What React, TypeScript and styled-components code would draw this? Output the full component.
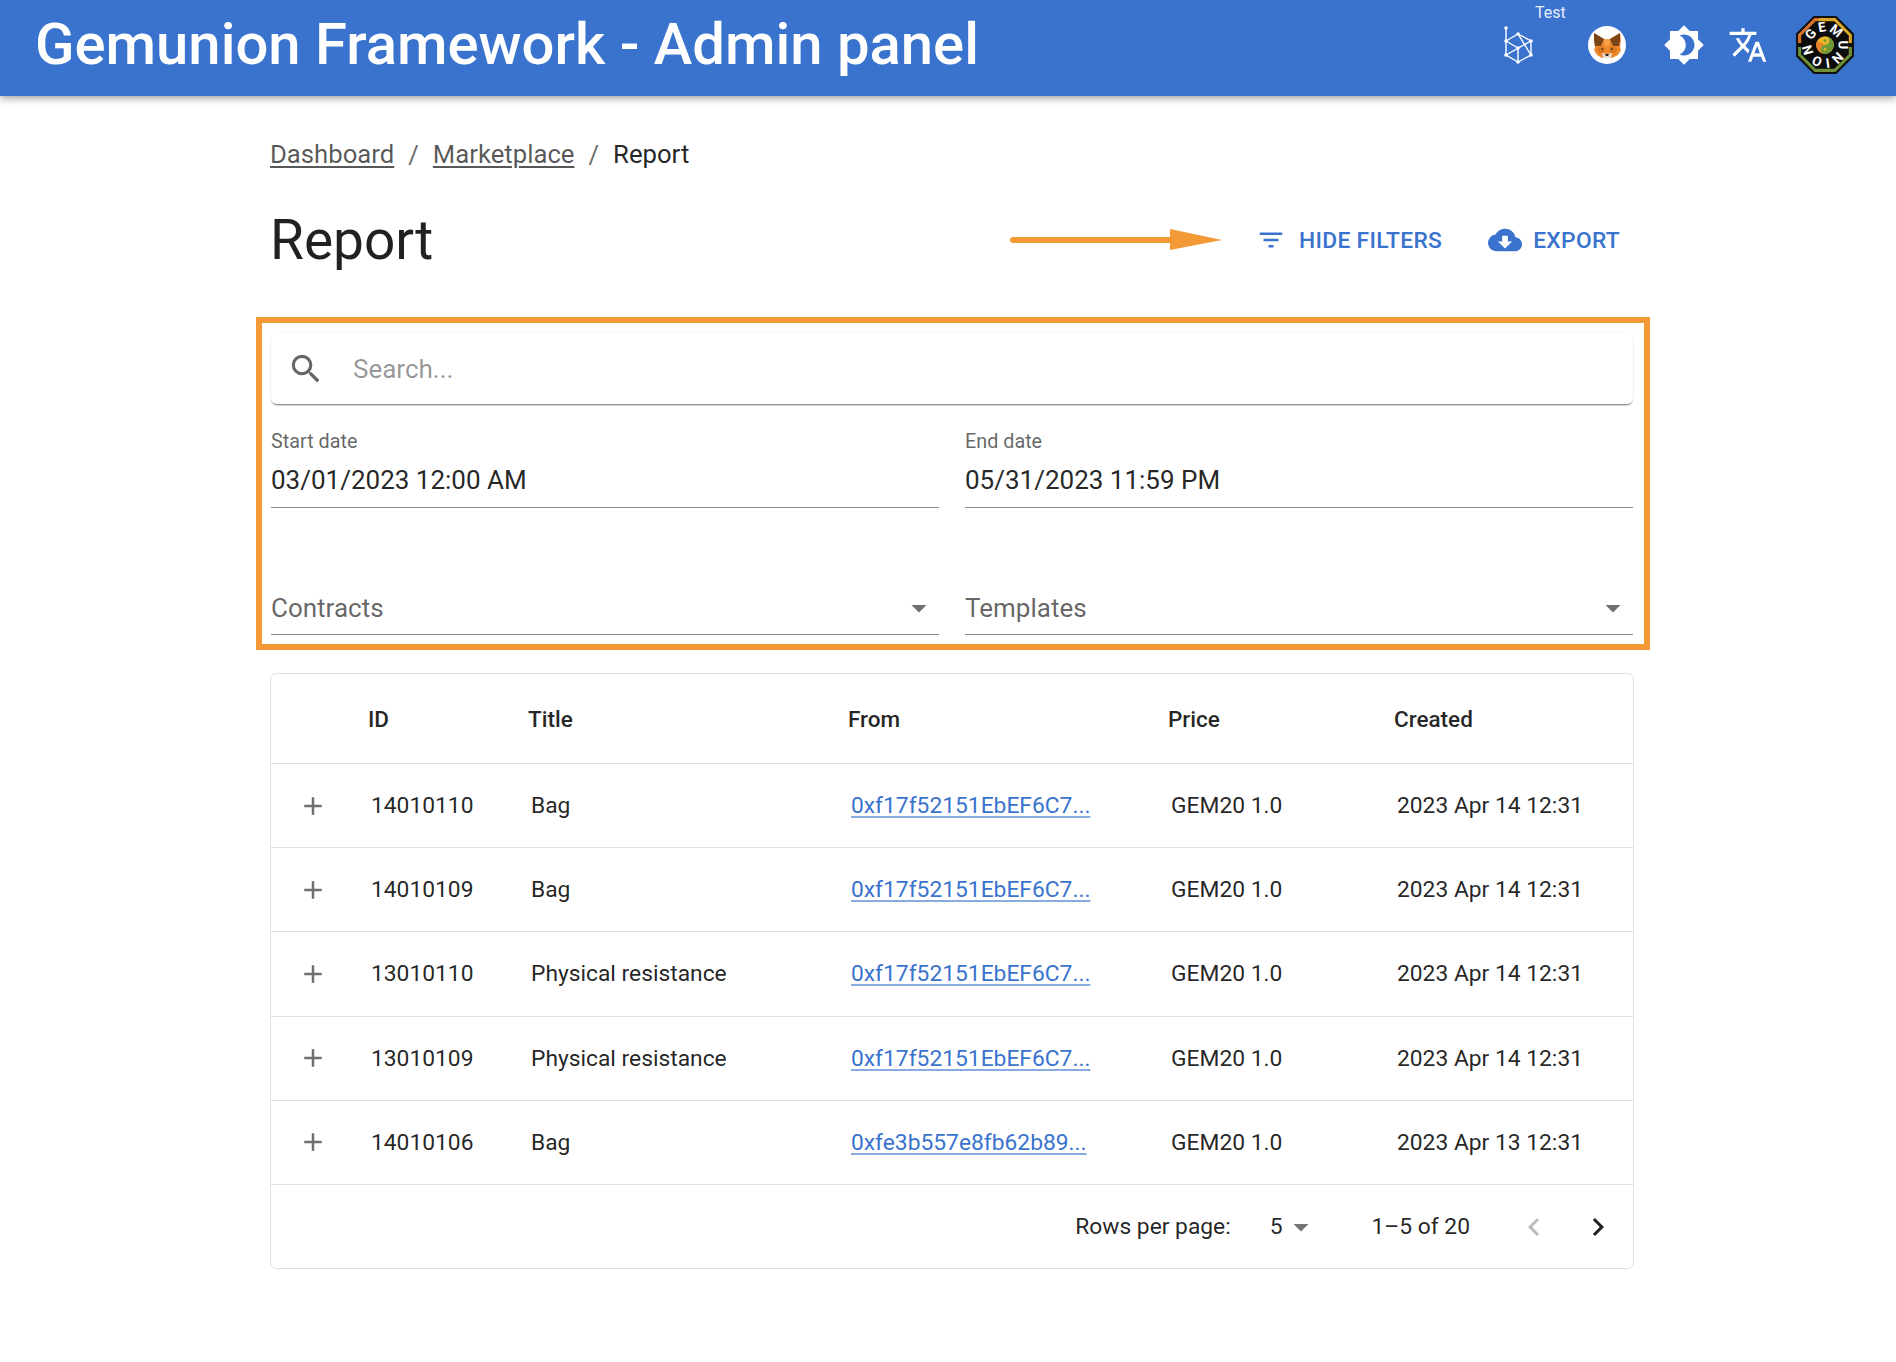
import { ReactElement } from 'react';
import styled, { createGlobalStyle } from 'styled-components';
import {
  MdAdd,
  MdArrowDropDown,
  MdBrightness4,
  MdChevronLeft,
  MdChevronRight,
  MdCloudDownload,
  MdFilterList,
  MdSearch,
  MdTranslate,
} from 'react-icons/md';

const GlobalStyle = createGlobalStyle`
  html, body {
    margin: 0;
    padding: 0;
    background: #fff;
    font-family: Roboto, "Liberation Sans", sans-serif;
    color: rgba(0, 0, 0, 0.87);
  }
`;

const Header = styled.header`
  height: 96px;
  background: #3973ce;
  box-shadow: 0 2px 8px rgba(0, 0, 0, 0.4);
  display: flex;
  align-items: center;
  justify-content: space-between;
  padding: 0 25px 0 35px;
  position: relative;
`;

const BrandTitle = styled.div`
  color: #fff;
  font-size: 58px;
  font-weight: 500;
  line-height: 88px;
  margin-bottom: 9px;
`;

const HeaderIcons = styled.div`
  display: flex;
  align-items: center;
  height: 96px;
  position: relative;
  color: #fff;
`;

const IconSlot = styled.div<{ $width: number }>`
  width: ${p => p.$width}px;
  display: flex;
  align-items: center;
  justify-content: center;
  margin-top: -6px;
`;

const NetworkLabel = styled.span`
  position: absolute;
  left: 61px;
  top: 4px;
  font-size: 16px;
  line-height: 18px;
  color: #e8eefa;
`;

const Page = styled.main`
  width: 1364px;
  margin-left: 270px;
  padding-top: 40px;
`;

const Crumbs = styled.nav`
  display: flex;
  gap: 14px;
  font-size: 25.7px;
  line-height: 36px;
  color: rgba(0, 0, 0, 0.6);
`;

const CrumbLink = styled.a`
  color: rgba(0, 0, 0, 0.66);
  text-decoration: underline;
  text-underline-offset: 3px;
`;

const CrumbCurrent = styled.span`
  color: rgba(0, 0, 0, 0.87);
`;

const TitleRow = styled.div`
  display: flex;
  align-items: center;
  justify-content: space-between;
  margin-top: 33px;
  height: 70px;
`;

const PageTitle = styled.h1`
  margin: 0;
  font-size: 55px;
  font-weight: 400;
  line-height: 70px;
`;

const Actions = styled.div`
  display: flex;
  align-items: center;
  gap: 46px;
  padding-right: 14px;
  position: relative;
`;

const ActionButton = styled.button<{ $gap: number }>`
  display: flex;
  align-items: center;
  gap: ${p => p.$gap}px;
  border: 0;
  background: none;
  padding: 0;
  color: #3973ce;
  font-family: inherit;
  font-size: 22.8px;
  font-weight: 500;
  letter-spacing: 0.3px;
  text-transform: uppercase;
`;

const ArrowMark = styled.svg`
  position: absolute;
  left: -246px;
  top: 2px;
`;

const FilterFrame = styled.section`
  box-sizing: border-box;
  margin: 42px -16px 0 -14px;
  height: 333px;
  border: 6px solid #f39a36;
  padding: 10px 11px 0 9px;
`;

const SearchBox = styled.div`
  display: flex;
  align-items: center;
  height: 71px;
  border-radius: 6px;
  background: #fff;
  box-shadow: 0 2px 2px -1px rgba(0, 0, 0, 0.55), 0 0 3px rgba(0, 0, 0, 0.08);
  color: #666;
  padding-left: 16px;
  gap: 28px;
`;

const SearchHint = styled.span`
  font-size: 26px;
  color: rgba(0, 0, 0, 0.42);
`;

const FieldGrid = styled.div`
  display: grid;
  grid-template-columns: 1fr 1fr;
  column-gap: 26px;
`;

const DateField = styled.div`
  border-bottom: 1px solid rgba(0, 0, 0, 0.45);
  height: 76px;
  margin-top: 27px;
`;

const FieldLabel = styled.div`
  font-size: 19.8px;
  line-height: 22px;
  color: rgba(0, 0, 0, 0.62);
`;

const FieldValue = styled.div`
  font-size: 26px;
  line-height: 30px;
  margin-top: 12px;
`;

const SelectField = styled.div`
  display: flex;
  align-items: center;
  justify-content: space-between;
  border-bottom: 1px solid rgba(0, 0, 0, 0.45);
  height: 52px;
  margin-top: 74px;
  font-size: 26px;
  color: rgba(0, 0, 0, 0.62);
  padding-right: 2px;

  svg {
    color: #6f6f6f;
  }
`;

const TableCard = styled.div`
  margin-top: 23px;
  border: 1px solid #e0e0e0;
  border-radius: 6px;
  height: 596px;
  box-sizing: border-box;
`;

const Row = styled.div`
  display: grid;
  grid-template-columns: 97px 160px 320px 320px 226px 1fr;
  align-items: center;
  height: 83.2px;
  border-bottom: 1px solid #e0e0e0;
  font-size: 22.8px;
`;

const HeadRow = styled(Row)`
  height: 89px;
  font-weight: 500;
  font-size: 22.5px;
`;

const PlusCell = styled.div`
  display: flex;
  justify-content: center;
  padding-right: 13px;
  color: #707070;
`;

const Cell = styled.div`
  padding-left: 3px;
`;

const AddressLink = styled.a`
  color: #3973ce;
  text-decoration: underline;
  text-decoration-color: rgba(57, 115, 206, 0.6);
  text-underline-offset: 3px;
`;

const Pagination = styled.div`
  display: flex;
  align-items: center;
  justify-content: flex-end;
  height: 84px;
  font-size: 22.8px;
  padding-right: 17px;
`;

const PerPage = styled.span`
  display: flex;
  align-items: center;
  margin: 0 53px 0 39px;

  svg {
    color: #757575;
  }
`;

const PagerButton = styled.span<{ $disabled?: boolean }>`
  display: flex;
  color: ${p => (p.$disabled ? '#bdbdbd' : 'rgba(0, 0, 0, 0.87)')};
  margin-left: ${p => (p.$disabled ? '46px' : '28px')};
`;

function NetworkIcon(): ReactElement {
  const points = [[3, 3], [3, 16], [3, 30], [15, 9], [15, 37], [28, 16], [28, 30], [15, 23]];
  return (
    <svg width="31" height="40" viewBox="0 0 31 40" fill="none" stroke="#fff" strokeWidth="1.4">
      <path d="M3 3v27l12 7 13-7V16L15 9 3 16" />
      <path d="M3 16l12 7 13-7M15 23v14M3 30l25-14M15 9l13 21" />
      <g fill="#fff" stroke="none">
        {points.map(([x, y]) => (
          <circle key={`${x}-${y}`} cx={x} cy={y} r="1.8" />
        ))}
      </g>
    </svg>
  );
}

function FoxIcon(): ReactElement {
  return (
    <svg width="38" height="38" viewBox="0 0 38 38">
      <circle cx="19" cy="19" r="19" fill="#fff" />
      <path d="M6 7l10 6h6l10-6 1 7-1 7 1 3-3 5-6 3h-10l-5-3-3-5 1-3-1-7z" fill="#ee8a2e" />
      <path d="M6 7l10 6-3 7H7l-1-6zM32 7l-10 6 3 7h6l1-6z" fill="#7b4318" />
      <path d="M16 13h6l-1 7h-4z" fill="#f6a24c" />
      <path d="M9 22l6-2 2 6-6 2zM29 22l-6-2-2 6 6 2z" fill="#d9761f" />
      <path d="M14 27l5 1 5-1-1 5h-8z" fill="#e7dbd0" />
      <path d="M17 28h4l-1 2h-2z" fill="#2a2420" />
      <path d="M13 22l3 1-2 1zM25 22l-3 1 2 1z" fill="#33261c" />
    </svg>
  );
}

function AvatarLogo(): ReactElement {
  return (
    <svg width="60" height="60" viewBox="0 0 58 58">
      <polygon points="18,1 40,1 57,18 57,40 40,57 18,57 1,40 1,18" fill="#111" />
      <path d="M19 3h20l16 16v8H3v-8z" fill="#d9a72a" />
      <path d="M19 3 3 19v8h5L24 3z" fill="#d8702a" />
      <path d="M3 31h52v8L39 55H19L3 39z" fill="#6f8f36" />
      <polygon points="20,6 38,6 52,20 52,38 38,52 20,52 6,38 6,20" fill="#0c0c0c" />
      <path id="logoRing" d="M16 29a13 13 0 1 1 26 0a13 13 0 1 1-26 0" fill="none" />
      <text fill="#fff" fontFamily="Roboto, sans-serif" fontSize="13" fontWeight="700">
        <textPath href="#logoRing" startOffset="4" textLength="78" lengthAdjust="spacing">GEMUNION</textPath>
      </text>
      <circle cx="29" cy="29" r="8.5" fill="#e8b52c" />
      <path d="M29 20.5a8.5 8.5 0 0 1 0 17 4.25 4.25 0 0 1 0-8.5 4.25 4.25 0 0 0 0-8.5z" fill="#6f9a3a" />
      <path d="M21.5 25a8.5 8.5 0 0 0 7.5 12.5 4.25 4.25 0 0 1 0-8.5z" fill="#e8842c" />
      <circle cx="29" cy="24.75" r="1.3" fill="#6f9a3a" />
      <circle cx="29" cy="33.25" r="1.3" fill="#e8b52c" />
    </svg>
  );
}

const rows = [
  ['14010110', 'Bag', '0xf17f52151EbEF6C7...', '2023 Apr 14 12:31'],
  ['14010109', 'Bag', '0xf17f52151EbEF6C7...', '2023 Apr 14 12:31'],
  ['13010110', 'Physical resistance', '0xf17f52151EbEF6C7...', '2023 Apr 14 12:31'],
  ['13010109', 'Physical resistance', '0xf17f52151EbEF6C7...', '2023 Apr 14 12:31'],
  ['14010106', 'Bag', '0xfe3b557e8fb62b89...', '2023 Apr 13 12:31'],
];

export default function App(): ReactElement {
  return (
    <>
      <GlobalStyle />
      <Header>
        <BrandTitle>Gemunion Framework - Admin panel</BrandTitle>
        <HeaderIcons>
          <NetworkLabel>Test</NetworkLabel>
          <IconSlot $width={89}><NetworkIcon /></IconSlot>
          <IconSlot $width={88}><FoxIcon /></IconSlot>
          <IconSlot $width={66}><MdBrightness4 size={42} /></IconSlot>
          <IconSlot $width={62}><MdTranslate size={40} /></IconSlot>
          <IconSlot $width={92}><AvatarLogo /></IconSlot>
        </HeaderIcons>
      </Header>
      <Page>
        <Crumbs>
          <CrumbLink>Dashboard</CrumbLink>
          <span>/</span>
          <CrumbLink>Marketplace</CrumbLink>
          <span>/</span>
          <CrumbCurrent>Report</CrumbCurrent>
        </Crumbs>
        <TitleRow>
          <PageTitle>Report</PageTitle>
          <Actions>
            <ArrowMark width="214" height="30" viewBox="0 0 214 30">
              <path d="M3 15h166" stroke="#f39a36" strokeWidth="6" strokeLinecap="round" />
              <path d="M160 4l52 11-52 10z" fill="#f39a36" />
            </ArrowMark>
            <ActionButton $gap={13}><MdFilterList size={30} />Hide filters</ActionButton>
            <ActionButton $gap={11}><MdCloudDownload size={34} />Export</ActionButton>
          </Actions>
        </TitleRow>
        <FilterFrame>
          <SearchBox>
            <MdSearch size={38} />
            <SearchHint>Search...</SearchHint>
          </SearchBox>
          <FieldGrid>
            <DateField>
              <FieldLabel>Start date</FieldLabel>
              <FieldValue>03/01/2023 12:00 AM</FieldValue>
            </DateField>
            <DateField>
              <FieldLabel>End date</FieldLabel>
              <FieldValue>05/31/2023 11:59 PM</FieldValue>
            </DateField>
            <SelectField>Contracts<MdArrowDropDown size={36} /></SelectField>
            <SelectField>Templates<MdArrowDropDown size={36} /></SelectField>
          </FieldGrid>
        </FilterFrame>
        <TableCard>
          <HeadRow>
            <span />
            <span>ID</span>
            <span>Title</span>
            <span>From</span>
            <span>Price</span>
            <span>Created</span>
          </HeadRow>
          {rows.map(r => (
            <Row key={r[0]}>
              <PlusCell><MdAdd size={30} /></PlusCell>
              <Cell>{r[0]}</Cell>
              <Cell>{r[1]}</Cell>
              <Cell><AddressLink>{r[2]}</AddressLink></Cell>
              <Cell>GEM20 1.0</Cell>
              <Cell>{r[3]}</Cell>
            </Row>
          ))}
          <Pagination>
            Rows per page:
            <PerPage>5<MdArrowDropDown size={36} /></PerPage>
            1–5 of 20
            <PagerButton $disabled><MdChevronLeft size={36} /></PagerButton>
            <PagerButton><MdChevronRight size={36} /></PagerButton>
          </Pagination>
        </TableCard>
      </Page>
    </>
  );
}
